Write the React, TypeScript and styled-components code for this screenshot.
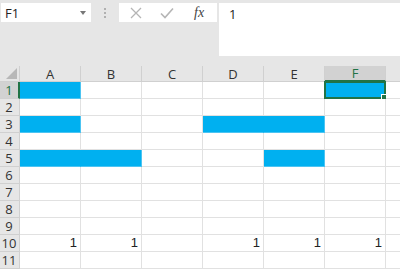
import React from "react";
import styled, { createGlobalStyle } from "styled-components";

const COLS = ["A", "B", "C", "D", "E", "F", "G"];
const ROWS = [1, 2, 3, 4, 5, 6, 7, 8, 9, 10, 11];
const FILLED = new Set(["A1", "A3", "D3", "E3", "A5", "B5", "E5", "F1"]);
const VALUES: Record<string, string> = { A10: "1", B10: "1", D10: "1", E10: "1", F10: "1" };
const ACTIVE_COL = "F";
const ACTIVE_ROW = 1;

const GREEN = "#217346";
const GRID = "#e1e1e1";
const FILL = "#00b0f0";

const Global = createGlobalStyle`
  html, body { margin: 0; padding: 0; }
  body {
    background: #e6e6e6;
    font-family: "Open Sans", "Noto Sans", sans-serif;
    width: 400px;
    height: 269px;
    overflow: hidden;
  }
`;

const Shell = styled.div`
  width: 400px;
  height: 269px;
  overflow: hidden;
  display: flex;
  flex-direction: column;
`;

const FormulaArea = styled.div`
  height: 66px;
  display: flex;
  align-items: flex-start;
  padding: 3px 0 0 1px;
  box-sizing: border-box;
`;

const NameBox = styled.div`
  width: 90px;
  height: 19px;
  background: #fff;
  display: flex;
  align-items: center;
  justify-content: space-between;
  padding: 0 5px 0 4px;
  box-sizing: border-box;
  font-size: 13px;
  color: #222;
`;

const Caret = styled.span`
  width: 0;
  height: 0;
  border-left: 3.5px solid transparent;
  border-right: 3.5px solid transparent;
  border-top: 4px solid #777;
`;

const Grip = styled.div`
  width: 28px;
  height: 19px;
  display: flex;
  flex-direction: column;
  align-items: center;
  justify-content: center;
  gap: 2px;
  span {
    width: 2px;
    height: 2px;
    background: #b0b0b0;
  }
`;

const FxBox = styled.div`
  width: 98px;
  height: 19px;
  background: #fff;
  display: flex;
  align-items: center;
  padding-left: 11px;
  box-sizing: border-box;
`;

const IconSlot = styled.span<{ $gap: number }>`
  display: flex;
  margin-left: ${p => p.$gap}px;
`;

const FxLabel = styled.span`
  font-family: "Liberation Serif", "DejaVu Serif", serif;
  font-style: italic;
  font-size: 14px;
  color: #444;
  margin-left: 20px;
`;

const Input = styled.div`
  flex: 1;
  height: 53px;
  margin-left: 2px;
  background: #fff;
  font-size: 13px;
  color: #222;
  padding: 2px 0 0 10px;
  box-sizing: border-box;
`;

const Sheet = styled.div`
  display: grid;
  grid-template-columns: 20px repeat(7, 61px);
  grid-template-rows: 16px repeat(11, 17px);
  background: #fff;
`;

const Corner = styled.div`
  background: #e6e6e6;
  border-right: 1px solid #d0d0d0;
  border-bottom: 1px solid #d0d0d0;
  box-sizing: border-box;
  position: relative;
  &::after {
    content: "";
    position: absolute;
    right: 2px;
    bottom: 2px;
    border-left: 11px solid transparent;
    border-bottom: 11px solid #b8b8b8;
  }
`;

const ColHead = styled.div<{ $active: boolean }>`
  background: ${p => (p.$active ? "#d2d2d2" : "#e6e6e6")};
  color: ${p => (p.$active ? GREEN : "#333")};
  border-right: 1px solid #d0d0d0;
  border-bottom: ${p => (p.$active ? `2px solid ${GREEN}` : "1px solid #d0d0d0")};
  box-sizing: border-box;
  font-size: 13px;
  display: flex;
  align-items: center;
  justify-content: center;
`;

const RowHead = styled.div<{ $active: boolean }>`
  background: ${p => (p.$active ? "#d2d2d2" : "#e6e6e6")};
  color: ${p => (p.$active ? GREEN : "#333")};
  border-right: ${p => (p.$active ? `2px solid ${GREEN}` : "1px solid #d0d0d0")};
  border-bottom: 1px solid #d0d0d0;
  box-sizing: border-box;
  font-size: 13px;
  line-height: 16px;
  text-align: center;
  padding-right: ${p => (p.$active ? "0" : "1px")};
`;

const Cell = styled.div<{ $filled: boolean; $joinRight: boolean }>`
  position: relative;
  background: ${p => (p.$filled ? FILL : "#fff")};
  border-right: 1px solid ${p => (p.$joinRight ? FILL : p.$filled ? "#4cc4f2" : GRID)};
  border-bottom: 1px solid ${p => (p.$filled ? "#4cc4f2" : GRID)};
  box-sizing: border-box;
  font-family: "Liberation Sans", "Noto Sans", sans-serif;
  font-size: 13px;
  line-height: 16px;
  text-align: right;
  padding-right: 3px;
  color: #222;
`;

const Selection = styled.div`
  position: absolute;
  left: -1px;
  top: -1px;
  right: -1px;
  bottom: -1px;
  border: 2px solid ${GREEN};
  box-sizing: border-box;
  &::after {
    content: "";
    position: absolute;
    right: -4px;
    bottom: -4px;
    width: 5px;
    height: 5px;
    background: ${GREEN};
    border: 1px solid #fff;
  }
`;

const Cross = () => (
  <svg width="12" height="12" viewBox="0 0 12 12">
    <path d="M1 1 L11 11 M11 1 L1 11" stroke="#b5b5b5" strokeWidth="1.3" fill="none" />
  </svg>
);

const Check = () => (
  <svg width="14" height="12" viewBox="0 0 14 12">
    <path d="M1 6.5 L5 10.5 L13 1.5" stroke="#b5b5b5" strokeWidth="1.6" fill="none" />
  </svg>
);

export default function App() {
  return (
    <Shell>
      <Global />
      <FormulaArea>
        <NameBox>
          <span>F1</span>
          <Caret />
        </NameBox>
        <Grip>
          <span />
          <span />
          <span />
        </Grip>
        <FxBox>
          <IconSlot $gap={0}>
            <Cross />
          </IconSlot>
          <IconSlot $gap={18}>
            <Check />
          </IconSlot>
          <FxLabel>fx</FxLabel>
        </FxBox>
        <Input>1</Input>
      </FormulaArea>
      <Sheet>
        <Corner />
        {COLS.map(c => (
          <ColHead key={c} $active={c === ACTIVE_COL}>
            {c === "G" ? null : c}
          </ColHead>
        ))}
        {ROWS.map(r => (
          <React.Fragment key={r}>
            <RowHead $active={r === ACTIVE_ROW}>{r}</RowHead>
            {COLS.map((c, i) => {
              const id = `${c}${r}`;
              const next = COLS[i + 1] ? `${COLS[i + 1]}${r}` : "";
              const filled = FILLED.has(id);
              return (
                <Cell key={id} $filled={filled} $joinRight={filled && FILLED.has(next)}>
                  {VALUES[id]}
                  {c === ACTIVE_COL && r === ACTIVE_ROW && <Selection />}
                </Cell>
              );
            })}
          </React.Fragment>
        ))}
      </Sheet>
    </Shell>
  );
}
